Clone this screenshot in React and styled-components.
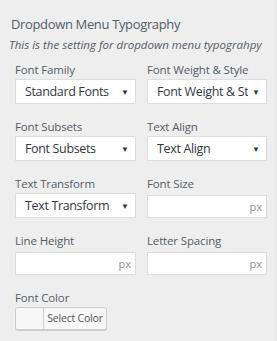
import React from 'react';
import styled, { createGlobalStyle } from 'styled-components';

const GlobalStyle = createGlobalStyle`
	html, body {
		margin: 0;
		padding: 0;
		background: #eeeeee;
	}
	body {
		font-family: "Open Sans", "Noto Sans", sans-serif;
		color: #555d66;
	}
`;

const fields = [
	{ label: 'Font Family', type: 'select', value: 'Standard Fonts' },
	{ label: 'Font Weight & Style', type: 'select', value: 'Font Weight & Style' },
	{ label: 'Font Subsets', type: 'select', value: 'Font Subsets' },
	{ label: 'Text Align', type: 'select', value: 'Text Align' },
	{ label: 'Text Transform', type: 'select', value: 'Text Transform' },
	{ label: 'Font Size', type: 'unit' },
	{ label: 'Line Height', type: 'unit' },
	{ label: 'Letter Spacing', type: 'unit' },
	{ label: 'Font Color', type: 'color' },
];

const App = () => {
	return (
		<>
			<GlobalStyle />
			<Panel>
				<Title>Dropdown Menu Typography</Title>
				<Description>This is the setting for dropdown menu typograhpy</Description>
				<Grid>
					{fields.map((f) => (
						<Field key={f.label}>
							<Label>{f.label}</Label>
							{f.type === 'select' && (
								<Select>
									<SelectText>{f.value}</SelectText>
									<Arrow>▼</Arrow>
								</Select>
							)}
							{f.type === 'unit' && (
								<UnitInput>
									<Unit>px</Unit>
								</UnitInput>
							)}
							{f.type === 'color' && (
								<ColorButton>
									<Swatch />
									<ColorText>Select Color</ColorText>
								</ColorButton>
							)}
						</Field>
					))}
				</Grid>
			</Panel>
		</>
	);
};

const Panel = styled.div`
	box-sizing: border-box;
	width: 277px;
	height: 341px;
	padding: 14px 0 0 0;
	border-right: 1px solid #e3e3e3;
	margin-right: 1px;
`;

const Title = styled.div`
	font-size: 13px;
	letter-spacing: -0.35px;
	line-height: 20px;
	color: #555d66;
	padding-left: 11px;
`;

const Description = styled.div`
	font-size: 11.5px;
	font-style: italic;
	line-height: 16px;
	color: #555d66;
	padding-left: 9px;
	margin-top: 3px;
`;

const Grid = styled.div`
	display: grid;
	grid-template-columns: 121px 120px;
	column-gap: 11px;
	row-gap: 14px;
	padding: 8px 0 0 15px;
`;

const Field = styled.div`
	display: flex;
	flex-direction: column;
	align-items: flex-start;
`;

const Label = styled.div`
	font-size: 11.5px;
	letter-spacing: -0.15px;
	line-height: 17px;
	color: #555d66;
	margin-bottom: 1px;
	white-space: nowrap;
`;

const Select = styled.div`
	box-sizing: border-box;
	width: 100%;
	height: 25px;
	background: #fff;
	border: 1px solid #dddddd;
	display: flex;
	align-items: center;
	padding: 0 6px 0 9px;
	overflow: hidden;
`;

const SelectText = styled.span`
	flex: 1;
	font-size: 12.5px;
	letter-spacing: -0.35px;
	color: #32373c;
	white-space: nowrap;
	overflow: hidden;
`;

const Arrow = styled.span`
	font-size: 8px;
	color: #32373c;
	margin-left: 4px;
	background: #fff;
`;

const UnitInput = styled.div`
	box-sizing: border-box;
	width: 100%;
	height: 23px;
	margin-top: 2px;
	background: #fff;
	border: 1px solid #dddddd;
	display: flex;
	align-items: center;
	justify-content: flex-end;
	padding-right: 4px;
`;

const Unit = styled.span`
	font-size: 11px;
	color: #8a8f94;
`;

const ColorButton = styled.div`
	box-sizing: border-box;
	height: 23px;
	width: 92px;
	display: flex;
	border: 1px solid #cccccc;
	border-radius: 3px;
	background: #f7f7f7;
	box-shadow: 0 1px 0 #cccccc;
	overflow: hidden;
`;

const Swatch = styled.span`
	width: 27px;
	border-right: 1px solid #cccccc;
	background: #f7f7f7;
`;

const ColorText = styled.span`
	flex: 1;
	font-size: 10.5px;
	letter-spacing: -0.2px;
	line-height: 21px;
	color: #555;
	text-align: center;
`;

export default App;
